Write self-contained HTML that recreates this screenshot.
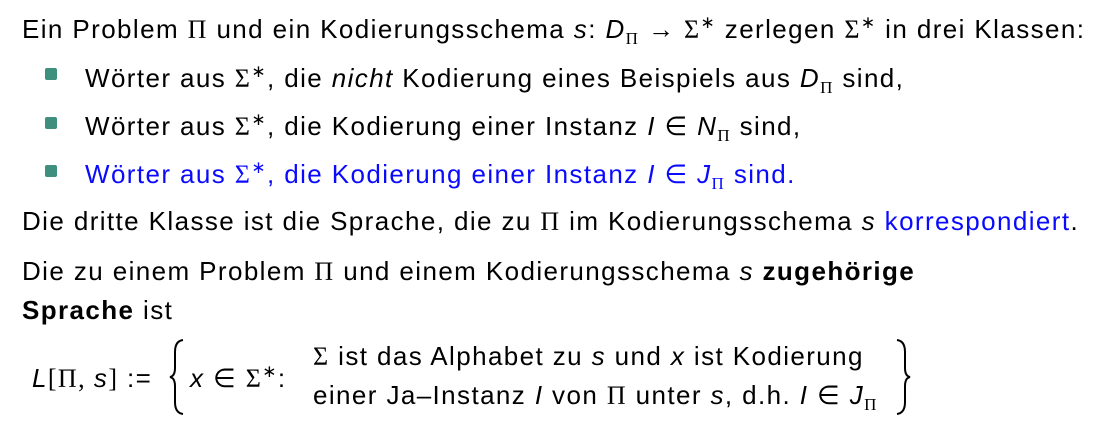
<!DOCTYPE html>
<html><head><meta charset="utf-8"><style>
body{margin:0;width:1112px;height:440px;background:#fff;position:relative;overflow:hidden;font-family:"Liberation Sans",sans-serif;font-size:26px;letter-spacing:1.4px;color:#000}
.l{position:absolute;line-height:26px;white-space:nowrap}
.m{font-family:"Liberation Serif",serif}
i{font-style:italic}
sub{font-size:17px;vertical-align:-6px;line-height:0}
sup{font-size:17px;vertical-align:10px;line-height:0}
.b{position:absolute;left:45px;width:12px;height:12px;background:#3f8f7f;border-radius:2px}
.blue{color:#0a0aff}
</style></head><body>
<div class="l" style="left:22px;top:16px">Ein Problem <span class="m">Π</span> und ein Kodierungsschema <i>s</i>: <i>D</i><sub class="m">Π</sub> <span class="m">→</span> <span class="m">Σ</span><sup>∗</sup> zerlegen <span class="m">Σ</span><sup>∗</sup> in drei Klassen:</div>
<div class="b" style="top:68px"></div>
<div class="l" style="left:85px;top:65px">Wörter aus <span class="m">Σ</span><sup>∗</sup>, die <i>nicht</i> Kodierung eines Beispiels aus <i>D</i><sub class="m">Π</sub> sind,</div>
<div class="b" style="top:117px"></div>
<div class="l" style="left:85px;top:113px">Wörter aus <span class="m">Σ</span><sup>∗</sup>, die Kodierung einer Instanz <i>I</i> ∈ <i>N</i><sub class="m">Π</sub> sind,</div>
<div class="b" style="top:165px"></div>
<div class="l blue" style="left:85px;top:161px">Wörter aus <span class="m">Σ</span><sup>∗</sup>, die Kodierung einer Instanz <i>I</i> ∈ <i>J</i><sub class="m">Π</sub> sind.</div>
<div class="l" style="left:22px;top:208px">Die dritte Klasse ist die Sprache, die zu <span class="m">Π</span> im Kodierungsschema <i>s</i> <span class="blue">korrespondiert</span>.</div>
<div class="l" style="left:22px;top:258px">Die zu einem Problem <span class="m">Π</span> und einem Kodierungsschema <i>s</i> <b>zugehörige</b></div>
<div class="l" style="left:22px;top:297px"><b>Sprache</b> ist</div>
<div class="l" style="left:32px;top:365px"><i>L</i><span class="m">[Π, </span><i>s</i><span class="m">]</span> := </div>
<svg style="position:absolute;left:168px;top:338px" width="20" height="78" viewBox="0 0 20 78"><path d="M15 2 Q7 3 7 14 L7 30 Q7 38 2 39 Q7 40 7 48 L7 64 Q7 75 15 76" fill="none" stroke="#000" stroke-width="2"/></svg>
<div class="l" style="left:190px;top:365px"><i>x</i> ∈ <span class="m">Σ</span><sup>∗</sup>:</div>
<div class="l" style="left:313px;top:343px"><span class="m">Σ</span> ist das Alphabet zu <i>s</i> und <i>x</i> ist Kodierung</div>
<div class="l" style="left:313px;top:382px">einer Ja–Instanz <i>I</i> von <span class="m">Π</span> unter <i>s</i>, d.h. <i>I</i> ∈ <i>J</i><sub class="m">Π</sub></div>
<svg style="position:absolute;left:892px;top:338px" width="20" height="78" viewBox="0 0 20 78"><path d="M5 2 Q13 3 13 14 L13 30 Q13 38 18 39 Q13 40 13 48 L13 64 Q13 75 5 76" fill="none" stroke="#000" stroke-width="2"/></svg>
</body></html>
